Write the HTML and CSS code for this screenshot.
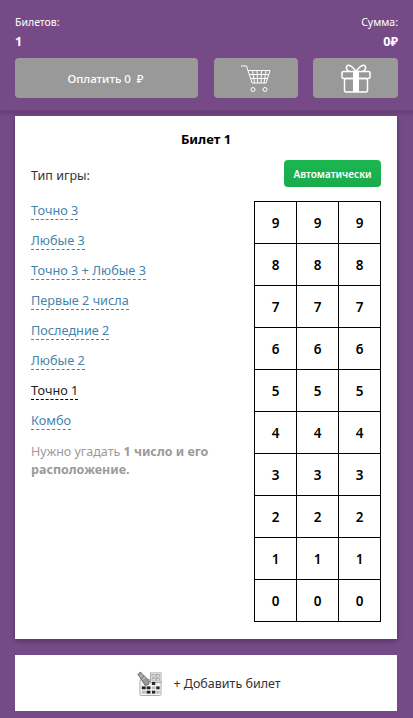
FILE: index.html
```html
<!DOCTYPE html>
<html lang="ru">
<head>
<meta charset="utf-8">
<title>Билеты</title>
<link rel="stylesheet" href="styles.css">
</head>
<body>
<header class="top">
  <div class="totals">
    <div class="total"><div class="total-label">Билетов:</div><div class="total-value">1</div></div>
    <div class="total total-right"><div class="total-label">Сумма:</div><div class="total-value">0₽</div></div>
  </div>
  <div class="actions">
    <button class="btn btn-pay">Оплатить 0&nbsp; ₽</button>
    <button class="btn btn-icon" aria-label="Корзина">
      <svg class="cart" width="30" height="27" viewBox="0 0 30 27" fill="none" stroke="#fff" stroke-width="1">
        <path d="M0 1h5.500l5.500 17"/>
        <path d="M7 5.500h22l-4 12.500H11"/>
        <path d="M8.500 9.500h19M10 13.500h16.500M11.500 5.500l2 12.500M16 5.500l.7 12.500M20.500 5.500l-.5 12.500M25 5.500l-2 12.500"/>
        <circle cx="12" cy="24.500" r="2"/><circle cx="24" cy="24.500" r="2"/>
      </svg>
    </button>
    <button class="btn btn-icon" aria-label="Подарок">
      <svg width="30" height="29" viewBox="0 0 30 29" fill="none" stroke="#fff" stroke-width="1.500">
        <rect x="1" y="7.500" width="28" height="7" rx="1.500"/>
        <rect x="3.500" y="14.500" width="23" height="13.500" rx="1.500"/>
        <path d="M15 7.500C12 3 9 .8 7 1.200 4.500 1.800 5 6.500 8 7.500M15 7.500c3-4.500 6-6.700 8-6.300 2.500.6 2 5.300-1 6.300"/>
        <rect x="12" y="7.500" width="6" height="20.500" fill="#fff" stroke="none"/>
      </svg>
    </button>
  </div>
</header>

<main class="ticket">
  <h2 class="ticket-title">Билет 1</h2>
  <div class="ticket-head">
    <span class="type-label">Тип игры:</span>
    <button class="auto">Автоматически</button>
  </div>
  <div class="ticket-body">
    <div class="types">
      <a class="type">Точно 3</a>
      <a class="type">Любые 3</a>
      <a class="type">Точно 3 + Любые 3</a>
      <a class="type">Первые 2 числа</a>
      <a class="type">Последние 2</a>
      <a class="type">Любые 2</a>
      <a class="type type-active">Точно 1</a>
      <a class="type">Комбо</a>
      <p class="hint">Нужно угадать <b>1 число и его расположение.</b></p>
    </div>
    <div class="grid">
      <div>9</div><div>9</div><div>9</div>
      <div>8</div><div>8</div><div>8</div>
      <div>7</div><div>7</div><div>7</div>
      <div>6</div><div>6</div><div>6</div>
      <div>5</div><div>5</div><div>5</div>
      <div>4</div><div>4</div><div>4</div>
      <div>3</div><div>3</div><div>3</div>
      <div>2</div><div>2</div><div>2</div>
      <div>1</div><div>1</div><div>1</div>
      <div>0</div><div>0</div><div>0</div>
    </div>
  </div>
</main>

<section class="add">
  <svg class="add-icon" width="25" height="25" viewBox="0 0 26 26">
    <rect x="3" y="9" width="22" height="16.500" rx="1.500" fill="#f4f4f4" stroke="#aaa"/>
    <rect x="14" y="2" width="11" height="10" fill="#f4f4f4" stroke="#aaa"/>
    <g fill="#d8d8d8" stroke="#888" stroke-width=".5">
      <rect x="15.500" y="3.500" width="3.500" height="3"/><rect x="20" y="3.500" width="3.500" height="3"/>
      <rect x="15.500" y="7.500" width="3.500" height="3"/><rect x="20" y="7.500" width="3.500" height="3"/>
    </g>
    <g fill="#222">
      <rect x="15.500" y="11.500" width="3.500" height="3"/>
      <rect x="5" y="16" width="4" height="3"/><rect x="10" y="16" width="4" height="3"/><rect x="20" y="16" width="3.500" height="3"/>
      <rect x="10" y="20.500" width="4" height="3"/><rect x="15.500" y="20.500" width="3.500" height="3"/>
    </g>
    <g fill="#bbb">
      <rect x="15.500" y="16" width="3.500" height="3"/><rect x="5" y="20.500" width="4" height="3"/><rect x="20" y="20.500" width="3.500" height="3"/>
    </g>
    <path d="M1 3.500 3.500 1l9.500 9.500-1 3.500-3.500 1z" fill="#999" stroke="#555" stroke-width=".8"/>
    <path d="M3 6l2.500-2.500M6 9l2.500-2.500" stroke="#eee" stroke-width=".8"/>
  </svg>
  <span class="add-text">+ Добавить билет</span>
</section>
</body>
</html>
```
FILE: styles.css
```css
* { box-sizing: border-box; }
html, body { margin: 0; padding: 0; }
body {
  width: 413px;
  height: 718px;
  overflow: hidden;
  background: #764a87;
  font-family: "Noto Sans", "Open Sans", sans-serif;
  color: #333;
}
.top {
  height: 113px;
  padding: 15px 15px 0;
  border-bottom: 3px solid #6a4279;
  box-shadow: 0 1px 2px rgba(0,0,0,.15);
}
.totals { display: flex; justify-content: space-between; color: #fff; }
.total-right { text-align: right; }
.total-label { font-size: 10.500px; line-height: 14px; }
.total-value { font-size: 12.500px; line-height: 14px; margin-top: 6px; font-weight: 700; }
.actions {
  display: grid;
  grid-template-columns: 183px 84px 84px;
  column-gap: 16px;
  margin-top: 9px;
}
.btn {
  height: 40px;
  border: 0;
  border-radius: 4px;
  background: #999;
  color: #fff;
  font: 500 11.500px "Noto Sans", sans-serif;
  display: flex;
  align-items: center;
  justify-content: center;
  padding: 0;
}
.btn-pay { padding-right: 2px; }
.btn-icon:last-child { margin-left: -1px; }
.ticket {
  background: #fff;
  margin: 3px 16px 0 15px;
  height: 523px;
  padding: 13px 16px 0;
  box-shadow: 0 2px 5px rgba(0,0,0,.3);
}
.ticket-title { margin: 0; font-size: 13px; line-height: 20px; font-weight: 700; text-align: center; color: #000; }
.ticket-head { display: flex; justify-content: space-between; align-items: center; margin-top: 11px; height: 27px; }
.type-label { font-size: 12.500px; margin-top: 3px; }
.auto {
  width: 97px;
  height: 27px;
  border: 0;
  border-radius: 4px;
  background: linear-gradient(#1bb650, #1aab4c);
  color: #fff;
  font: 600 10px "Noto Sans", sans-serif;
  padding: 0;
}
.ticket-body { display: flex; justify-content: space-between; margin-top: 14px; }
.types { width: 200px; display: flex; flex-direction: column; align-items: flex-start; }
.type {
  font-size: 12.700px;
  line-height: 18px;
  color: #4484ad;
  border-bottom: 1px dashed #4484ad;
  margin-bottom: 11px;
}
.type-active { color: #222; border-bottom-color: #000; }
.hint { margin: 2px 0 0; font-size: 12.500px; line-height: 18px; color: #9a9a9a; }
.grid {
  display: grid;
  grid-template-columns: repeat(3, 42px);
  grid-auto-rows: 42px;
  width: 127px;
  height: 421px;
  border-top: 1px solid #000;
  border-left: 1px solid #000;
}
.grid div {
  display: flex;
  align-items: center;
  justify-content: center;
  border-right: 1px solid #000;
  border-bottom: 1px solid #000;
  font-size: 13.500px;
  font-weight: 600;
  color: #000;
}
.add {
  background: #fff;
  margin: 16px 16px 0 15px;
  height: 56px;
  display: flex;
  align-items: center;
  justify-content: center;
  gap: 11px;
  padding-left: 6px;
}
.add-text { font-size: 12.500px; color: #333; }
```
